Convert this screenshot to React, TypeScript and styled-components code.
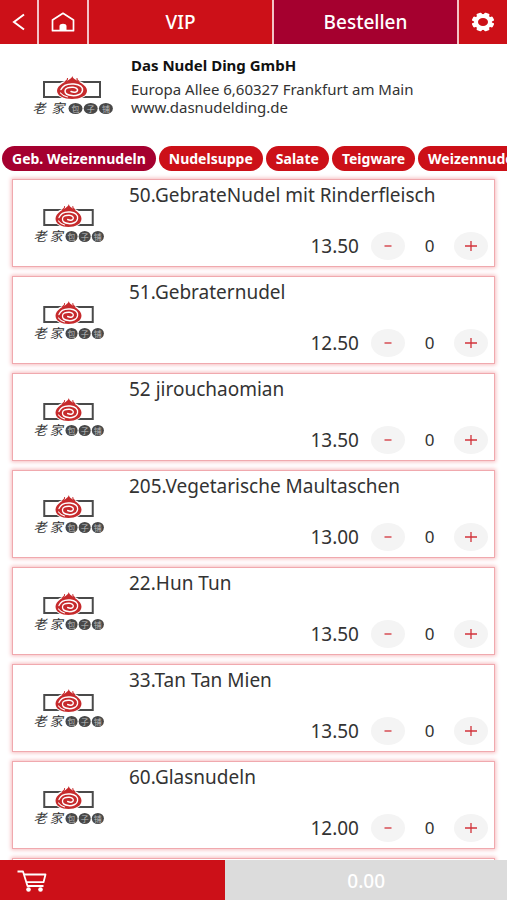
import React, { useState } from 'react';
import styled, { createGlobalStyle } from 'styled-components';

const red = '#cc1018';
const wine = '#a5002f';

const GlobalStyle = createGlobalStyle`
  *, *::before, *::after { box-sizing: border-box; }
  body {
    margin: 0;
    background: #fff;
    color: #333;
    font-family: 'Noto Sans', 'Open Sans', 'Noto Sans CJK SC', sans-serif;
  }
  button { font: inherit; border: 0; padding: 0; cursor: pointer; }
  h1, h2, p { margin: 0; font-weight: 400; }
`;

const Page = styled.div`
  display: flex;
  flex-direction: column;
  height: 100vh;
`;

const TopBar = styled.nav`
  display: grid;
  grid-template-columns: 37px 48px 1fr 1fr 48px;
  gap: 2px;
  height: 44px;
  flex: none;
  background: #f3c3c6;
`;

const BarButton = styled.button<{ $active?: boolean }>`
  display: flex;
  align-items: center;
  justify-content: center;
  background: ${(p) => (p.$active ? wine : red)};
  color: #fff;
  font-size: 19px;
  font-weight: 500;
`;

const Shop = styled.header`
  display: flex;
  flex: none;
  height: 102px;
  padding: 11px 12px 0 31px;
`;

const ShopLogo = styled.div`
  flex: none;
  width: 100px;
  padding-top: 21px;
`;

const ShopName = styled.h1`
  color: #111;
  font-size: 15px;
  font-weight: 700;
  line-height: 20px;
  margin-bottom: 5px;
`;

const ShopLine = styled.p`
  font-size: 15px;
  line-height: 18px;
`;

const Chips = styled.div`
  display: flex;
  flex: none;
  gap: 3px;
  padding: 0 2px;
  overflow: hidden;
`;

const Chip = styled.button<{ $active: boolean }>`
  flex: none;
  height: 25px;
  padding: 0 10px;
  border-radius: 13px;
  background: ${(p) => (p.$active ? wine : red)};
  color: #fff;
  font-size: 14px;
  font-weight: 700;
  white-space: nowrap;
`;

const List = styled.main`
  display: flex;
  flex: 1;
  min-height: 0;
  flex-direction: column;
  gap: 9px;
  padding: 8px 12px;
  overflow-y: auto;
  scrollbar-width: none;
`;

const Card = styled.article`
  display: flex;
  flex: none;
  height: 88px;
  padding: 0 6px 0 20px;
  border: 1px solid #f0a9ae;
  background: #fff;
  box-shadow: 0 0 4px 1px #f6bcc0;
`;

const CardLogo = styled.div`
  flex: none;
  width: 96px;
  padding-top: 24px;
`;

const CardBody = styled.div`
  display: flex;
  flex: 1;
  flex-direction: column;
  justify-content: space-between;
  padding: 2px 0 6px;
`;

const DishName = styled.h2`
  font-size: 19px;
  line-height: 26px;
`;

const Order = styled.div`
  display: flex;
  align-items: center;
  justify-content: flex-end;
`;

const Price = styled.span`
  margin-right: 12px;
  font-size: 19px;
  line-height: 28px;
`;

const Step = styled.button`
  display: flex;
  align-items: center;
  justify-content: center;
  width: 34px;
  height: 28px;
  border-radius: 50%;
  background: #f4f4f4;
  color: #d2333b;
`;

const Count = styled.output`
  width: 49px;
  font-size: 17px;
  line-height: 28px;
  text-align: center;
`;

const Footer = styled.footer`
  display: grid;
  grid-template-columns: 4fr 5fr;
  flex: none;
  height: 40px;
`;

const CartButton = styled.button`
  display: flex;
  align-items: center;
  padding-left: 17px;
  background: ${red};
`;

const Total = styled.div`
  background: #dcdcdc;
  color: #fff;
  font-size: 19px;
  font-weight: 500;
  line-height: 42px;
  text-align: center;
`;

function Logo({ width }: { width: number }) {
  const k = width / 82;
  const discs = ['包', '子', '铺'];
  return (
    <svg width={width} height="40" viewBox={`0 0 ${width} 40`} role="img" aria-label="Logo" display="block">
      <rect x={13 * k} y="6" width={56 * k} height="15" fill="none" stroke="#4a4a4a" strokeWidth="2" />
      <ellipse cx={41 * k} cy="14" rx={17 * k} ry="10" fill="#fff" />
      <g transform={`translate(${41 * k} 0) scale(${k} 1)`} fill="none" strokeLinecap="round">
        <path
          d="M0.500 0C0.500 3 5 4 9 7C13 9.500 15 12 15 14.800C15 20 8 23 0 23C-8 23-15 20-15 14.800C-15 12-13 9.500-9 7C-5 4.500-1 3.500 0.500 0Z"
          fill="#c62a2c"
        />
        <path d="M-4.500 2.500C-4 4-6 4.500-7 6M5 2.500C4.500 4 6 4.500 7 5.500" stroke="#c62a2c" strokeWidth="1.200" />
        <path
          d="M-11 13.500C-9 9-3 7.600 2 8C8 8.600 11 11 10.500 14.500C10 18.500 4 20 0 19.600C-4 19.200-7 17.500-7 15C-7 12-3 11 1 11.200C4 11.400 6 13 5.500 14.500C5 16.300 2 16.800-1 15.500"
          stroke="#fff"
          strokeWidth="1.500"
        />
        <path d="M-11.500 17C-9.500 19.500-7 20.500-4.500 21" stroke="#fff" strokeWidth="1.200" />
      </g>
      <g fill="#333" fontFamily="'Noto Sans CJK SC', sans-serif" fontStyle="italic" fontSize="13" textAnchor="middle">
        <text x={8 * k} y="37">老</text>
        <text x={27 * k} y="37">家</text>
      </g>
      {discs.map((char, i) => (
        <g key={char}>
          <ellipse cx={(44.5 + i * 15.2) * k} cy="32.500" rx={7 * k} ry="5.600" fill="#484848" />
          <text
            x={(44.5 + i * 15.2) * k}
            y="35.500"
            fontSize="8"
            fill="#bbb"
            textAnchor="middle"
            fontFamily="'Noto Sans CJK SC', sans-serif"
          >
            {char}
          </text>
        </g>
      ))}
    </svg>
  );
}

const BackIcon = () => (
  <svg width="14" height="18" viewBox="0 0 14 18" fill="none" stroke="#fff" strokeWidth="2">
    <path d="M12 1.500L2 9L12 16.500" />
  </svg>
);

const HomeIcon = () => (
  <svg width="24" height="20" viewBox="0 0 24 20" fill="none" stroke="#fff" strokeWidth="1.700">
    <path d="M1.500 8L12 1.300L22.500 8V18.700H1.500Z" strokeLinejoin="round" />
    <path d="M8.500 18.500V14C8.500 11 15.500 11 15.500 14V18.500Z" fill="#fff" stroke="none" />
  </svg>
);

const GearIcon = () => (
  <svg width="24" height="20" viewBox="-12 -10 24 20" fill="none">
    <ellipse rx="7" ry="6" stroke="#fff" strokeWidth="4" />
    <g fill="#fff">
      {[0, 45, 90, 135, 180, 225, 270, 315].map((angle) => (
        <rect
          key={angle}
          x="-2.600"
          y="-10.400"
          width="5.200"
          height="4"
          rx="1.200"
          transform={`scale(1.080 .9) rotate(${angle + 22.5})`}
        />
      ))}
    </g>
  </svg>
);

const CartIcon = () => (
  <svg width="30" height="22" viewBox="0 0 30 22" fill="none" stroke="#fff" strokeWidth="1.800">
    <path d="M0.500 1.500H6L10.500 16H26.500" strokeLinejoin="round" />
    <path d="M7 4.500H28.500L26.500 12.200H9.500" strokeLinejoin="round" />
    <circle cx="11.500" cy="19.500" r="2.300" fill="#fff" stroke="none" />
    <circle cx="23.500" cy="19.500" r="2.300" fill="#fff" stroke="none" />
  </svg>
);

const MinusIcon = () => (
  <svg width="12" height="12" viewBox="0 0 12 12" stroke="currentColor" strokeWidth="1.300">
    <path d="M2.500 6H9.500" />
  </svg>
);

const PlusIcon = () => (
  <svg width="12" height="12" viewBox="0 0 12 12" stroke="currentColor" strokeWidth="1.300">
    <path d="M0 6H12M6 1V11" />
  </svg>
);

const categories = ['Geb. Weizennudeln', 'Nudelsuppe', 'Salate', 'Teigware', 'Weizennudeln'];

const dishes = [
  { name: '50.GebrateNudel mit Rinderfleisch', price: 13.5 },
  { name: '51.Gebraternudel', price: 12.5 },
  { name: '52 jirouchaomian', price: 13.5 },
  { name: '205.Vegetarische Maultaschen', price: 13 },
  { name: '22.Hun Tun', price: 13.5 },
  { name: '33.Tan Tan Mien', price: 13.5 },
  { name: '60.Glasnudeln', price: 12 },
];

export default function App() {
  const [category, setCategory] = useState(0);
  const [counts, setCounts] = useState<number[]>(dishes.map(() => 0));
  const change = (index: number, by: number) =>
    setCounts((all) => all.map((n, i) => (i === index ? Math.max(0, n + by) : n)));
  const total = dishes.reduce((sum, dish, i) => sum + dish.price * counts[i], 0);

  return (
    <Page>
      <GlobalStyle />
      <TopBar>
        <BarButton aria-label="Zurück"><BackIcon /></BarButton>
        <BarButton aria-label="Startseite"><HomeIcon /></BarButton>
        <BarButton>VIP</BarButton>
        <BarButton $active>Bestellen</BarButton>
        <BarButton aria-label="Einstellungen"><GearIcon /></BarButton>
      </TopBar>
      <Shop>
        <ShopLogo><Logo width={82} /></ShopLogo>
        <div>
          <ShopName>Das Nudel Ding GmbH</ShopName>
          <ShopLine>Europa Allee 6,60327 Frankfurt am Main</ShopLine>
          <ShopLine>www.dasnudelding.de</ShopLine>
        </div>
      </Shop>
      <Chips>
        {categories.map((label, i) => (
          <Chip key={label} $active={i === category} onClick={() => setCategory(i)}>{label}</Chip>
        ))}
      </Chips>
      <List>
        {dishes.map((dish, i) => (
          <Card key={dish.name}>
            <CardLogo><Logo width={71} /></CardLogo>
            <CardBody>
              <DishName>{dish.name}</DishName>
              <Order>
                <Price>{dish.price.toFixed(2)}</Price>
                <Step aria-label={`${dish.name} weniger`} onClick={() => change(i, -1)}><MinusIcon /></Step>
                <Count>{counts[i]}</Count>
                <Step aria-label={`${dish.name} mehr`} onClick={() => change(i, 1)}><PlusIcon /></Step>
              </Order>
            </CardBody>
          </Card>
        ))}
        <Card aria-hidden="true" />
      </List>
      <Footer>
        <CartButton aria-label="Warenkorb"><CartIcon /></CartButton>
        <Total>{total.toFixed(2)}</Total>
      </Footer>
    </Page>
  );
}
